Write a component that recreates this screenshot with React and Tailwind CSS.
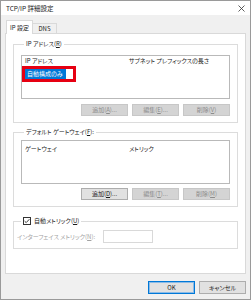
import React from 'react';

function Btn({ children, disabled, className = '' }) {
  return (
    <div
      className={`h-[12px] flex items-center justify-center border ${
        disabled
          ? 'bg-[#d4d4d4] border-[#c7c7c7] text-[#8c8c8c]'
          : 'bg-[#e1e1e1] border-[#adadad] text-[#1a1a1a]'
      } ${className}`}
    >
      {children}
    </div>
  );
}

function ButtonRow({ labels, firstEnabled }) {
  return (
    <div className="flex justify-end gap-[4px]">
      {labels.map((l, i) => (
        <Btn key={i} disabled={!(firstEnabled && i === 0)} className="w-[47px]">
          {l}
        </Btn>
      ))}
    </div>
  );
}

export default function App() {
  return (
    <div className="w-[251px] h-[300px] border border-[#9a9a9a] bg-[#f0f0f0] flex flex-col whitespace-nowrap text-[6px] leading-[10px] text-[#1a1a1a] font-['Noto_Sans_CJK_JP',sans-serif] [font-feature-settings:'palt']">
      {/* Title bar */}
      <div className="h-[14px] bg-white flex items-center justify-between pl-[5px] pr-[5px]">
        <span className="text-[6.5px]">TCP/IP 詳細設定</span>
        <svg width="7" height="7" viewBox="0 0 7 7" className="text-[#333]">
          <path d="M0.5 0.5L6.5 6.5M6.5 0.5L0.5 6.5" stroke="currentColor" strokeWidth="0.8" />
        </svg>
      </div>

      <div className="pl-[4px] mt-[5px] flex flex-col">
        {/* Tabs */}
        <div className="flex items-end -mb-px relative z-10 pl-[1px] h-[14px]">
          <div className="w-[27px] h-[14px] bg-white border-x border-t border-[#d9d9d9] flex items-center justify-center">
            IP 設定
          </div>
          <div className="w-[24px] h-[11px] bg-[#f0f0f0] border-t border-r border-b border-[#d9d9d9] flex items-center justify-center">
            DNS
          </div>
        </div>

        {/* Panel */}
        <div className="w-[241px] h-[241px] border border-[#d9d9d9] bg-white px-[7px] pt-[5px] flex flex-col">
          {/* IP address group */}
          <fieldset className="border border-[#dcdcdc] px-[7px] pt-[6px] pb-[6px]">
            <legend className="ml-[3px] px-[2px] leading-[10px]">
              IP アドレス(<u>R</u>)
            </legend>
            <div className="h-[44px] border border-[#b9b9b9] bg-white flex flex-col">
              <div className="flex h-[10px] items-center">
                <div className="w-[107px] pl-[3px]">IP アドレス</div>
                <div>サブネット プレフィックスの長さ</div>
              </div>
              <div className="w-[54px] h-[16px] border-[3px] border-[#e60012] flex items-center">
                <span className="w-[41px] h-[10px] bg-[#0078d7] text-white pl-[2px] flex items-center">
                  自動構成のみ
                </span>
              </div>
            </div>
            <div className="mt-[5px]">
              <ButtonRow
                labels={[
                  <span key="a">追加(<u>A</u>)...</span>,
                  <span key="e">編集(<u>E</u>)...</span>,
                  <span key="v">削除(<u>V</u>)</span>,
                ]}
              />
            </div>
          </fieldset>

          {/* Default gateway group */}
          <fieldset className="mt-[4px] border border-[#dcdcdc] px-[7px] pt-[3px] pb-[6px]">
            <legend className="ml-[3px] px-[2px] leading-[10px]">
              デフォルト ゲートウェイ(<u>F</u>):
            </legend>
            <div className="h-[44px] border border-[#b9b9b9] bg-white flex flex-col pt-[3px]">
              <div className="flex h-[10px] items-center">
                <div className="w-[107px] pl-[3px]">ゲートウェイ</div>
                <div>メトリック</div>
              </div>
            </div>
            <div className="mt-[4px]">
              <ButtonRow
                firstEnabled
                labels={[
                  <span key="d">追加(<u>D</u>)...</span>,
                  <span key="t">編集(<u>T</u>)...</span>,
                  <span key="m">削除(<u>M</u>)</span>,
                ]}
              />
            </div>
          </fieldset>

          {/* Automatic metric group */}
          <fieldset className="mt-[9px] border border-[#dcdcdc] pl-[3px] pr-[7px] pt-[4px] pb-[5px]">
            <legend className="ml-[4px] px-[2px] leading-[10px]">
              <span className="flex items-center gap-[3px]">
                <svg width="8" height="8" viewBox="0 0 8 8">
                  <rect x="0.5" y="0.5" width="7" height="7" fill="white" stroke="#333" />
                  <path d="M1.6 4.1L3.2 5.6L6.4 2.2" fill="none" stroke="#222" strokeWidth="0.9" />
                </svg>
                <span>自動メトリック(<u>U</u>)</span>
              </span>
            </legend>
            <div className="flex items-center">
              <span className="w-[86px] shrink-0 text-[#a3a3a3]">
                インターフェイス メトリック(<u>N</u>):
              </span>
              <div className="w-[50px] h-[13px] border border-[#d9d9d9] bg-white" />
            </div>
          </fieldset>
        </div>

        {/* Dialog buttons */}
        <div className="w-[241px] mt-[7px] flex justify-end gap-[4px]">
          <div className="w-[47px] h-[13px] flex items-center justify-center bg-[#e1e1e1] border border-[#0078d7] shadow-[inset_0_0_0_1px_#8cbbe6]">
            OK
          </div>
          <div className="w-[47px] h-[13px] flex items-center justify-center bg-[#e1e1e1] border border-[#adadad]">
            キャンセル
          </div>
        </div>
      </div>
    </div>
  );
}
